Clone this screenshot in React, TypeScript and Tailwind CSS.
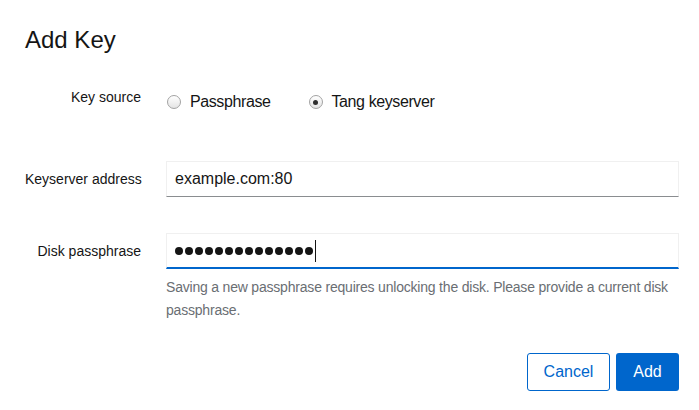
import React from "react";

function Radio({checked, label}: {checked?: boolean; label: string}) {
  return (
    <label className="flex items-center gap-[9px]">
      <span className="flex h-[14px] w-[14px] items-center justify-center rounded-full border border-[#a3a3a3] bg-gradient-to-b from-white to-[#e4e4e4]">
        {checked && <span className="h-[5px] w-[5px] rounded-full bg-[#2e2e2e]" />}
      </span>
      <span className="text-[16px] leading-[24px] tracking-[-0.4px] text-[#151515]">{label}</span>
    </label>
  );
}

export default function App() {
  return (
    <div
      className="h-[410px] w-[699px] bg-white pl-[25px] pr-[20px] pt-[25px] text-[#151515]"
      style={{fontFamily: '"Liberation Sans", Arial, sans-serif'}}
    >
      <h1 className="text-[24px] leading-[30px] font-normal">Add Key</h1>

      <div className="mt-[35px] grid grid-cols-[116px_1fr] gap-x-[25px]">
        {/* Key source */}
        <div className="-mt-[3px] whitespace-nowrap text-right text-[14px] leading-[20px]">Key source</div>
        <div className="flex items-center gap-[38px] pl-[1px]">
          <Radio label="Passphrase" />
          <Radio checked label="Tang keyserver" />
        </div>

        {/* Keyserver address */}
        <div className="mt-[47px] whitespace-nowrap pt-[8px] text-right text-[14px] leading-[20px]">Keyserver address</div>
        <div className="mt-[47px]">
          <div className="flex h-[36px] items-center border border-[#f0f0f0] border-b-[#8a8d90] px-[8px] text-[16px]">
            example.com:80
          </div>
        </div>

        {/* Disk passphrase */}
        <div className="mt-[36px] whitespace-nowrap pt-[8px] text-right text-[14px] leading-[20px]">Disk passphrase</div>
        <div className="mt-[36px]">
          <div className="flex h-[36px] items-center border border-[#f0f0f0] border-b-2 border-b-[#0066cc] px-[8px]">
            <div className="flex items-center gap-[2px]">
              {Array.from({length: 14}).map((_, i) => (
                <span key={i} className="h-[8px] w-[8px] rounded-full bg-[#151515]" />
              ))}
            </div>
            <span className="ml-[2px] h-[22px] w-[1px] bg-[#151515]" />
          </div>
          <p className="mt-[7px] text-[14px] leading-[23px] tracking-[-0.2px] text-[#6a6e73]">
            Saving a new passphrase requires unlocking the disk. Please provide a current disk passphrase.
          </p>
        </div>
      </div>

      <div className="mt-[31px] flex justify-end gap-[6px]">
        <button className="h-[38px] w-[83px] rounded-[3px] border border-[#0066cc] bg-white text-[16px] text-[#0066cc]">
          Cancel
        </button>
        <button className="h-[38px] w-[63px] rounded-[3px] bg-[#0066cc] text-[16px] text-white">
          Add
        </button>
      </div>
    </div>
  );
}
